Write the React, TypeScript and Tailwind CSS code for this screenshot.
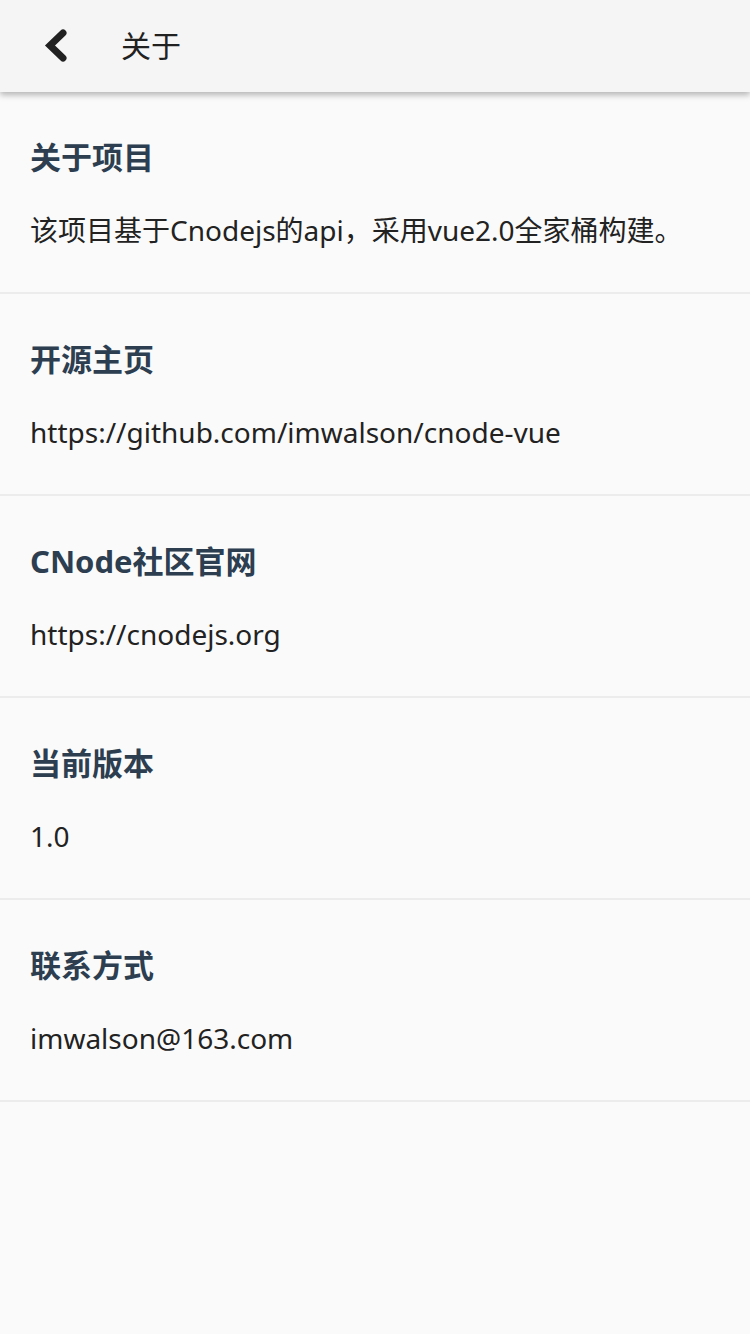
import React from "react";

const items = [
  { title: "关于项目", text: "该项目基于Cnodejs的api，采用vue2.0全家桶构建。" },
  { title: "开源主页", text: "https://github.com/imwalson/cnode-vue" },
  { title: "CNode社区官网", text: "https://cnodejs.org" },
  { title: "当前版本", text: "1.0" },
  { title: "联系方式", text: "imwalson@163.com" },
];

const font = "font-['Noto_Sans','Noto_Sans_CJK_SC',sans-serif]";

export default function App() {
  return (
    <div className={`min-h-[1334px] w-[750px] bg-[#fafafa] ${font}`}>
      <header className="relative z-10 flex h-[92px] items-center bg-[#f5f5f5] shadow-[0_3px_6px_rgba(0,0,0,0.28)]">
        <button className="ml-[30px] flex h-[60px] w-[50px] items-center justify-center text-[#212121]" aria-label="返回">
          <svg viewBox="30 15 50 60" width="50" height="60" fill="none" stroke="currentColor" strokeWidth="7" strokeLinecap="round" strokeLinejoin="miter">
            <polyline points="63,32 50,44.5 63,57" />
          </svg>
        </button>
        <h1 className="ml-[41px] text-[30px] leading-none font-normal text-[#212121]">关于</h1>
      </header>

      <main>
        {items.map((item) => (
          <section key={item.title} className="border-b-2 border-[#ececec] px-[30px] pt-[45px] pb-[42px]">
            <h2 className="text-[31px] leading-[40px] font-bold text-[#2c3e50]">{item.title}</h2>
            <p className="mt-[33px] text-[28px] leading-[40px] text-[#222]">{item.text}</p>
          </section>
        ))}
      </main>
    </div>
  );
}
